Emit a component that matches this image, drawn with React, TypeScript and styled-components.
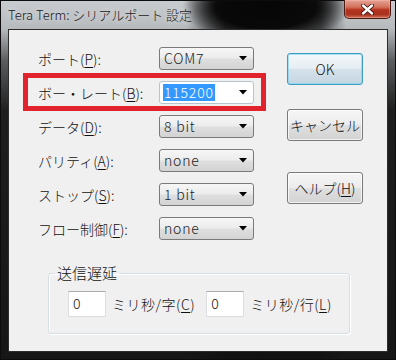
import React from "react"
import styled, { createGlobalStyle } from "styled-components"

const GlobalStyle = createGlobalStyle`
  html, body {
    margin: 0;
    padding: 0;
    background: #1b1b1b;
  }
  body {
    font-family: "Noto Sans CJK JP", "Liberation Sans", sans-serif;
    font-weight: 300;
    color: #000;
  }
`

type Field = {
  label: string
  accel: string
  value: string
  active?: boolean
}

const fields: Field[] = [
  { label: "ポート", accel: "P", value: "COM7" },
  { label: "ボー・レート", accel: "B", value: "115200", active: true },
  { label: "データ", accel: "D", value: "8 bit" },
  { label: "パリティ", accel: "A", value: "none" },
  { label: "ストップ", accel: "S", value: "1 bit" },
  { label: "フロー制御", accel: "F", value: "none" },
]

const Arrow = () => (
  <svg width="8" height="5" viewBox="0 0 8 5">
    <polygon points="0,0 8,0 4,4.5" fill="#000" />
  </svg>
)

export default function App() {
  return (
    <>
      <GlobalStyle />
      <S.Window>
        <S.TitleBar>
          <S.Title>Tera Term: シリアルポート 設定</S.Title>
          <S.CloseButton>
            <svg width="13" height="11" viewBox="0 0 13 11">
              <path d="M2 1.5 L11 9.5 M11 1.5 L2 9.5" stroke="#3a0c05" strokeWidth="4" strokeLinecap="round" />
              <path d="M2 1.5 L11 9.5 M11 1.5 L2 9.5" stroke="#fff" strokeWidth="2.4" strokeLinecap="round" />
            </svg>
          </S.CloseButton>
        </S.TitleBar>
        <S.Client>
          <S.TopSection>
            <S.Form>
              {fields.map((f) => (
                <S.Row key={f.accel} $highlight={f.active}>
                  <S.Label>
                    {f.label}(<u>{f.accel}</u>):
                  </S.Label>
                  <S.Combo $active={f.active}>
                    <S.ComboText $selected={f.active}>{f.value}</S.ComboText>
                    <Arrow />
                  </S.Combo>
                </S.Row>
              ))}
            </S.Form>
            <S.Buttons>
              <S.Button $default>OK</S.Button>
              <S.Button $gap={24}>キャンセル</S.Button>
              <S.Button $gap={31}>
                ヘルプ(<u>H</u>)
              </S.Button>
            </S.Buttons>
          </S.TopSection>
          <S.GroupBox>
            <S.Legend>送信遅延</S.Legend>
            <S.DelayRow>
              <S.NumberBox>0</S.NumberBox>
              <S.Unit>
                ミリ秒/字(<u>C</u>)
              </S.Unit>
              <S.NumberBox>0</S.NumberBox>
              <S.Unit>
                ミリ秒/行(<u>L</u>)
              </S.Unit>
            </S.DelayRow>
          </S.GroupBox>
        </S.Client>
      </S.Window>
    </>
  )
}

const S = {
  Window: styled.div`
    width: 396px;
    height: 360px;
    display: flex;
    flex-direction: column;
    box-sizing: border-box;
    border: 1px solid #0c0c0c;
    background:
      radial-gradient(ellipse 84px 36px at 265px 6px, rgba(6, 6, 6, 1) 0%, rgba(6, 6, 6, 0.95) 60%, rgba(6, 6, 6, 0) 100%),
      linear-gradient(90deg, rgba(0, 0, 0, 0) 0, rgba(0, 0, 0, 0) 185px, rgba(15, 15, 15, 0.75) 225px, rgba(15, 15, 15, 0.6) 320px, rgba(0, 0, 0, 0) 345px),
      linear-gradient(180deg, #c8ccd0 0, #b6babd 28px, #5a5c5e 60px, #1e1e1e 110px, #161616 100%);
  `,
  TitleBar: styled.div`
    height: 28px;
    display: flex;
    justify-content: space-between;
    align-items: flex-start;
  `,
  Title: styled.div`
    padding: 6px 0 0 7px;
    font-family: "Noto Sans CJK JP", "Liberation Sans", sans-serif;
    font-size: 13px;
    line-height: 16px;
    color: #1a1a1a;
    text-shadow: 0 0 6px rgba(255, 255, 255, 0.8);
  `,
  CloseButton: styled.div`
    width: 47px;
    height: 19px;
    margin: -1px 4px 0 0;
    display: flex;
    align-items: center;
    justify-content: center;
    box-sizing: border-box;
    border: 1px solid #4a1a12;
    border-top: none;
    border-radius: 0 0 5px 5px;
    background: linear-gradient(180deg, #e6a394 0%, #d2705c 40%, #b5321d 55%, #a8321e 80%, #d0745a 100%);
    box-shadow: inset 0 0 0 1px rgba(255, 200, 190, 0.35);
  `,
  Client: styled.div`
    flex: 1;
    margin: 0 7px 7px 7px;
    border: 1px solid #2c2c2c;
    background: #f0f0f0;
    display: flex;
    flex-direction: column;
  `,
  TopSection: styled.div`
    display: flex;
    padding: 17px 0 0 29px;
  `,
  Form: styled.div`
    display: flex;
    flex-direction: column;
    gap: 11px;
  `,
  Row: styled.div<{ $highlight?: boolean }>`
    position: relative;
    display: flex;
    align-items: center;
    height: 23px;

    ${(p) =>
      p.$highlight &&
      `
      &::after {
        content: "";
        position: absolute;
        left: -15px;
        right: -12px;
        top: -8px;
        bottom: -7px;
        border: 5px solid #e0232d;
        pointer-events: none;
      }
    `}
  `,
  Label: styled.div`
    width: 121px;
    font-size: 14px;
    line-height: 18px;
    color: #111;
    white-space: nowrap;

    u {
      text-underline-offset: 2px;
    }
  `,
  Combo: styled.div<{ $active?: boolean }>`
    width: 95px;
    height: 23px;
    box-sizing: border-box;
    display: flex;
    align-items: center;
    justify-content: space-between;
    padding: 0 6px 0 3px;
    border: 1px solid ${(p) => (p.$active ? "#b8c4cc" : "#7a7a7a")};
    border-radius: 3px;
    background: ${(p) =>
      p.$active ? "#ffffff" : "linear-gradient(180deg, #f6f6f6 0%, #ececec 48%, #dfdfdf 52%, #d3d3d3 100%)"};
  `,
  ComboText: styled.span<{ $selected?: boolean }>`
    font-size: 14px;
    line-height: 17px;
    letter-spacing: 0.8px;
    padding: 0 1px;
    color: ${(p) => (p.$selected ? "#fff" : "#222")};
    background: ${(p) => (p.$selected ? "#3399ff" : "transparent")};
  `,
  Buttons: styled.div`
    display: flex;
    flex-direction: column;
    margin-left: 33px;
    padding-top: 6px;
  `,
  Button: styled.div<{ $default?: boolean; $gap?: number }>`
    width: 76px;
    height: 32px;
    margin-top: ${(p) => p.$gap ?? 0}px;
    box-sizing: border-box;
    display: flex;
    align-items: center;
    justify-content: center;
    font-size: 14px;
    color: #111;
    border-radius: 3px;
    border: 1px solid ${(p) => (p.$default ? "#3c9dc4" : "#7a7a7a")};
    background: ${(p) =>
      p.$default
        ? "linear-gradient(180deg, #f3f8fb 0%, #e6eef3 48%, #d3e1ea 52%, #c6d6e1 100%)"
        : "linear-gradient(180deg, #f6f6f6 0%, #ececec 48%, #dfdfdf 52%, #d3d3d3 100%)"};
    box-shadow: inset 0 0 0 1px ${(p) => (p.$default ? "rgba(120, 210, 240, 0.6)" : "rgba(255, 255, 255, 0.7)")};

    u {
      text-underline-offset: 2px;
    }
  `,
  GroupBox: styled.fieldset`
    width: 302px;
    height: 70px;
    box-sizing: border-box;
    margin: 24px 0 0 39px;
    padding: 9px 0 0 19px;
    border: 1px solid #d5dfe5;
    border-radius: 3px;
    box-shadow: inset 1px 1px 0 #fff, 1px 1px 0 #fff;
  `,
  Legend: styled.legend`
    margin-left: -13px;
    padding: 0 2px;
    font-size: 15px;
    line-height: 18px;
    color: #111;
  `,
  DelayRow: styled.div`
    display: flex;
    align-items: center;
    gap: 6px;
  `,
  NumberBox: styled.div`
    width: 38px;
    height: 26px;
    box-sizing: border-box;
    padding: 2px 4px;
    background: #fff;
    border: 1px solid #dadde2;
    border-top-color: #abadb3;
    font-size: 14px;
    line-height: 18px;
    color: #111;
  `,
  Unit: styled.div`
    font-size: 14px;
    color: #111;
    margin-right: 5px;
    letter-spacing: 0.5px;

    u {
      text-underline-offset: 2px;
    }
  `,
}
